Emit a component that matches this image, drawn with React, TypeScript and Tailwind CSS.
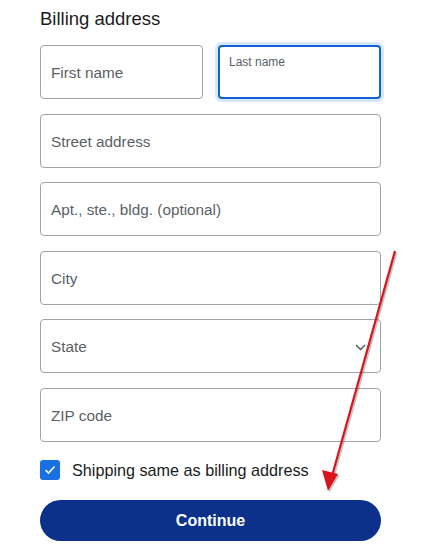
import React from "react";

const font = { fontFamily: '"Liberation Sans", Arial, sans-serif' };

function Field({ label }: { label: string }) {
  return (
    <div className="h-[54px] rounded-[4px] border border-[#a3a3a3] bg-white flex items-center px-[10px] pt-[3px] text-[15.3px] text-[#5b5f66]">
      {label}
    </div>
  );
}

export default function App() {
  return (
    <div className="relative w-[424px] h-[555px] bg-white overflow-hidden" style={font}>
      <div className="pl-[40px] pr-[43px] pt-[7px]">
        <h2 className="text-[18.5px] leading-[24px] text-[#1b1b1b]">Billing address</h2>
        <div className="mt-[14px] flex flex-col gap-[14.6px]">
          <div className="grid grid-cols-2 gap-[15px]">
            <Field label="First name" />
            <div className="h-[54px] rounded-[4px] border-2 border-[#1261cf] bg-white shadow-[0_0_0_3px_#d3e8fb] px-[9px] pt-[6px] text-[12px] text-[#5b5f66]">
              Last name
            </div>
          </div>
          <Field label="Street address" />
          <Field label="Apt., ste., bldg. (optional)" />
          <Field label="City" />
          <div className="h-[54px] rounded-[4px] border border-[#a3a3a3] bg-white flex items-center justify-between px-[10px] pt-[3px] text-[15.3px] text-[#5b5f66]">
            <span>State</span>
            <svg width="11" height="7" viewBox="0 0 11 7" className="mr-[4px]">
              <path d="M1 1 L5.5 5.5 L10 1" fill="none" stroke="#4a4d52" strokeWidth="1.3" />
            </svg>
          </div>
          <Field label="ZIP code" />
        </div>
        <div className="mt-[16px] flex items-center gap-[12px]">
          <div className="w-[20px] h-[20px] rounded-[3px] bg-[#1a6fe3] flex items-center justify-center">
            <svg width="12" height="10" viewBox="0 0 12 10">
              <path d="M1.5 5 L4.5 8 L10.5 1.5" fill="none" stroke="white" strokeWidth="1.6" />
            </svg>
          </div>
          <span className="text-[16.2px] text-[#1b1b1b]">Shipping same as billing address</span>
        </div>
        <button className="mt-[18px] w-full h-[41px] rounded-full bg-[#0b318a] text-white font-bold text-[16px]">
          Continue
        </button>
      </div>
      <svg className="absolute left-0 top-0 pointer-events-none" width="424" height="555" viewBox="0 0 424 555">
        <g opacity="0.35" transform="translate(1.5,1.5)">
          <line x1="395" y1="251" x2="332" y2="476" stroke="#555" strokeWidth="2.2" />
          <path d="M328 491 L322 470 L338 474 Z" fill="#555" />
        </g>
        <line x1="395" y1="251" x2="332" y2="476" stroke="#d7141c" strokeWidth="2.2" />
        <path d="M328 491 L322 470 L338 474 Z" fill="#d7141c" />
      </svg>
    </div>
  );
}
